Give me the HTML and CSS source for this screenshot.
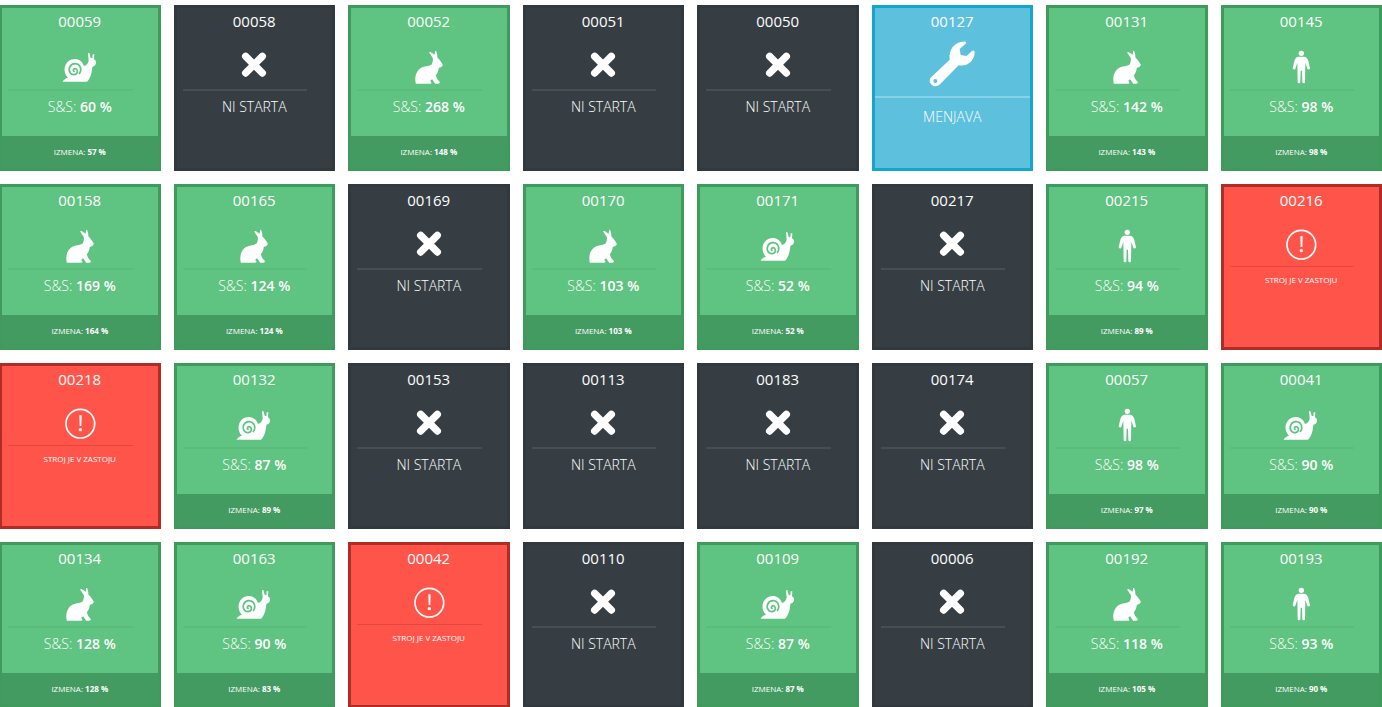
FILE: index.html
```html
<!DOCTYPE html>
<html lang="sl">
<head>
  <meta charset="UTF-8">
  <title>Stroji</title>
  <link rel="stylesheet" href="styles.css">
</head>
<body>

  <!-- Icons -->
  <svg class="sprite" aria-hidden="true">
    <symbol id="snail" viewBox="-30 -15 180 162">
      <path d="M8 125 C11 118 17 115 24 113 C10 100 10 76 25 64 C41 51 65 56 72 78 C80 76 85 68 86 62 L84 40 L88 39 L92 53 L97 55 L98 43 L103 43 L102 58 C109 62 110 68 106 75 C104 79 98 78 97 82 C95 98 93 114 81 125 Z"/>
      <path class="spiral" d="M57 102 C67 91 62 72 46 71 C30 70 23 88 31 99 C37 107 49 105 52 97 C54 88 46 83 41 88 C39 91 41 95 44 94"/>
    </symbol>
    <symbol id="rabbit" viewBox="-4.5 -15 180 162">
      <path d="M46 131 C42 112 46 95 60 85 C70 78 86 80 94 73 C97 66 98 58 97 54 L86 38 C88 33 95 38 102 45 L104 32 C109 32 110 42 111 53 C118 58 122 66 127 74 C126 80 120 82 115 83 C114 92 111 100 106 106 C108 113 111 120 116 124 C120 127 118 131 114 131 L104 131 L96 119 C92 118 88 122 91 125 C95 129 92 131 88 131 Z"/>
    </symbol>
    <symbol id="person" viewBox="168 105 180 162">
      <circle cx="259" cy="160" r="8"/>
      <path d="M250 170 L268 170 C275 171 278 176 280 183 L285 205 C285 209 279 210 277 206 L271 188 L270 247 C270 251 262 251 262 247 L261 212 L257 212 L256 247 C256 251 248 251 248 247 L247 188 L241 206 C239 210 233 209 233 205 L238 183 C240 176 243 171 250 170 Z"/>
    </symbol>
    <symbol id="cross" viewBox="672 105 180 162">
      <path class="cross-line" d="M737 169 L787 219 M787 169 L737 219"/>
    </symbol>
    <symbol id="wrench" viewBox="172 105 180 162">
      <path fill-rule="evenodd" d="M200 231 L255 179 C251 148 272 122 303 125 C306 127 304 131 301 133 L285 147 L288 165 L306 168 L322 153 C327 149 331 153 330 159 C328 184 308 200 282 196 L226 253 C218 261 206 261 199 252 C193 245 194 237 200 231 Z M212 237 A6 6 0 1 0 212 249 A6 6 0 1 0 212 237 Z"/>
    </symbol>
    <symbol id="alert" viewBox="168 102 180 162">
      <circle class="ring" cx="259" cy="194" r="43"/>
      <path d="M256 169 L263 169 L262 201 L257 201 Z"/>
      <circle cx="259" cy="212" r="5"/>
    </symbol>
  </svg>

  <main class="board" id="board"></main>

  <script>
    // [number, state, speed %, shift %]
    const machines = [
      ["00059", "snail", 60, 57],
      ["00058", "off"],
      ["00052", "rabbit", 268, 148],
      ["00051", "off"],
      ["00050", "off"],
      ["00127", "change"],
      ["00131", "rabbit", 142, 143],
      ["00145", "person", 98, 98],

      ["00158", "rabbit", 169, 164],
      ["00165", "rabbit", 124, 124],
      ["00169", "off"],
      ["00170", "rabbit", 103, 103],
      ["00171", "snail", 52, 52],
      ["00217", "off"],
      ["00215", "person", 94, 89],
      ["00216", "stopped"],

      ["00218", "stopped"],
      ["00132", "snail", 87, 89],
      ["00153", "off"],
      ["00113", "off"],
      ["00183", "off"],
      ["00174", "off"],
      ["00057", "person", 98, 97],
      ["00041", "snail", 90, 90],

      ["00134", "rabbit", 128, 128],
      ["00163", "snail", 90, 83],
      ["00042", "stopped"],
      ["00110", "off"],
      ["00109", "snail", 87, 87],
      ["00006", "off"],
      ["00192", "rabbit", 118, 105],
      ["00193", "person", 93, 90]
    ];

    const states = {
      off: { icon: "cross", text: "NI STARTA" },
      change: { icon: "wrench", text: "MENJAVA" },
      stopped: { icon: "alert", text: "STROJ JE V ZASTOJU" }
    };

    document.getElementById("board").innerHTML = machines.map(function (m) {
      const state = states[m[1]];
      const type = state ? m[1] : "running";
      const icon = state ? state.icon : m[1];
      const text = state ? state.text : `S&amp;S: <b>${m[2]} %</b>`;
      const footer = state ? "" : `<footer class="shift">IZMENA: <b>${m[3]} %</b></footer>`;

      return `<section class="tile ${type}">
        <h2 class="number">${m[0]}</h2>
        <div class="icon"><svg aria-hidden="true"><use href="#${icon}"></use></svg></div>
        <hr class="line">
        <p class="status">${text}</p>
        ${footer}
      </section>`;
    }).join("");
  </script>

</body>
</html>
```

FILE: styles.css
```css
body {
  margin: 0;
  height: 100vh;
  overflow: hidden;
  background-color: #fff;
  font-family: "Open Sans", "Noto Sans", sans-serif;
  color: #fff;
}

.sprite {
  display: none;
}

.board {
  display: grid;
  grid-template-columns: repeat(8, 1fr);
  gap: 13px;
  margin: 5px 0 0 -1px;
}

/* Tiles */
.tile {
  display: flex;
  flex-direction: column;
  box-sizing: border-box;
  min-height: 166px;
  border: 3px solid;
  text-align: center;
}

.running {
  background-color: #5fc381;
  border-color: #409a5e;
}

.off {
  background-color: #363e43;
  border-color: #31393e;
}

.change {
  background-color: #5dc0dd;
  border-color: #14a5d1;
}

.stopped {
  background-color: #ff544a;
  border-color: #b02d27;
}

.number {
  margin: 0;
  font-size: 15px;
  font-weight: 400;
  line-height: 27px;
}

.icon {
  height: 54px;
}

.icon svg {
  display: block;
  width: 60px;
  height: 54px;
  margin: 0 auto;
  fill: #fff;
}

.spiral {
  fill: none;
  stroke: #5fc381;
  stroke-width: 5;
}

.cross-line {
  fill: none;
  stroke: #fff;
  stroke-width: 22;
  stroke-linecap: round;
}

.ring {
  fill: none;
  stroke: #fff;
  stroke-width: 5;
}

.line {
  height: 2px;
  margin: 0 25px 0 6px;
  border: 0;
  background-color: #5abb7b;
}

.off .line {
  background-color: #484f53;
}

.status {
  margin: 0;
  font-size: 14px;
  font-weight: 300;
  line-height: 31px;
}

.status b {
  font-weight: 600;
}

.shift {
  margin-top: auto;
  background-color: #449b61;
  font-size: 8px;
  line-height: 32px;
}

/* Machine change */
.change .icon {
  height: 61px;
}

.change .line {
  margin: 0;
  background-color: #86d3e9;
}

.change .status {
  line-height: 38px;
}

/* Machine stopped */
.stopped .icon {
  height: 52px;
}

.stopped .line {
  height: 1px;
  background-color: #e2463e;
}

.stopped .status {
  font-size: 8px;
  font-weight: 400;
  line-height: 26px;
}
```
